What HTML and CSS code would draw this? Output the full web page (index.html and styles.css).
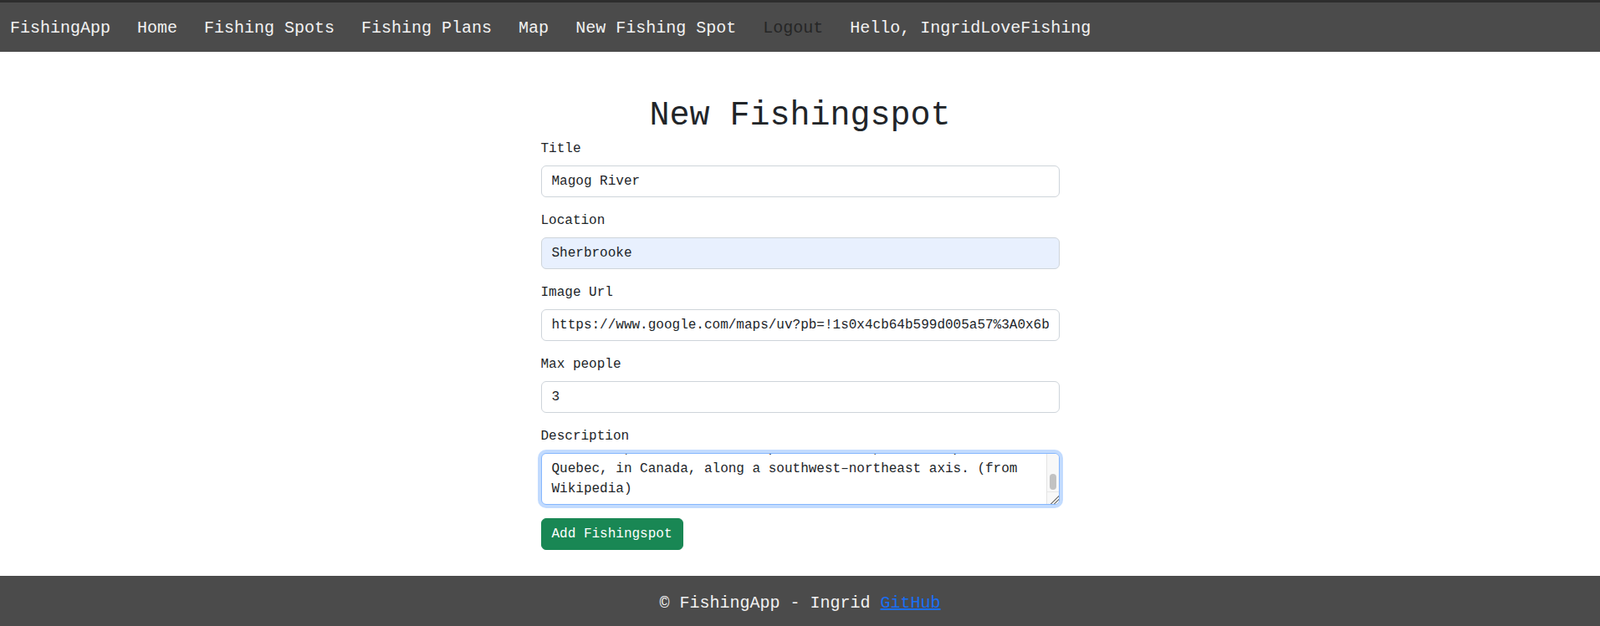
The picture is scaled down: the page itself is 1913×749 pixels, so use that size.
FILE: index.html
```html
<!DOCTYPE html>
<html lang="en">
<head>
<meta charset="utf-8">
<title>New Fishingspot</title>
<link rel="stylesheet" href="styles.css">
</head>
<body>
<nav class="navbar">
  <a class="nav-item brand" href="#">FishingApp</a>
  <a class="nav-item" href="#">Home</a>
  <a class="nav-item" href="#">Fishing Spots</a>
  <a class="nav-item" href="#">Fishing Plans</a>
  <a class="nav-item" href="#">Map</a>
  <a class="nav-item" href="#">New Fishing Spot</a>
  <a class="nav-item muted" href="#">Logout</a>
  <span class="nav-item">Hello, IngridLoveFishing</span>
</nav>
<main class="main">
  <h1 class="page-title">New Fishingspot</h1>
  <form class="form-wrap">
    <div class="field">
      <label class="form-label" for="title">Title</label>
      <input class="form-control" id="title" type="text" value="Magog River">
    </div>
    <div class="field">
      <label class="form-label" for="location">Location</label>
      <input class="form-control autofilled" id="location" type="text" value="Sherbrooke">
    </div>
    <div class="field">
      <label class="form-label" for="image">Image Url</label>
      <input class="form-control" id="image" type="text" value="https://www.google.com/maps/uv?pb=!1s0x4cb64b599d005a57%3A0x6b8c2f7a4e1d3c90">
    </div>
    <div class="field">
      <label class="form-label" for="max">Max people</label>
      <input class="form-control" id="max" type="text" value="3">
    </div>
    <div class="field">
      <label class="form-label" for="description">Description</label>
      <div class="textarea-wrap">
        <textarea class="form-control textarea focused" id="description" rows="2">The Magog River is a tributary of the Saint-François River.
It drains Lake Memphrémagog and flows to Sherbrooke.
In Estrie, the river flows past the town, next to pools of Quebec, in Canada, along a southwest–northeast axis. (from Wikipedia)</textarea>
        <div class="fake-scrollbar" aria-hidden="true">
          <div class="sb-track"><div class="sb-thumb"></div></div>
          <div class="sb-corner"></div>
        </div>
      </div>
    </div>
    <button class="btn-success" type="button">Add Fishingspot</button>
  </form>
</main>
<footer class="footer">
  <span class="footer-text">© FishingApp - Ingrid <a class="footer-link" href="#">GitHub</a></span>
</footer>
<script src="script.js"></script>
</body>
</html>
```

FILE: styles.css
```css
* {
  box-sizing: border-box;
}

html, body {
  height: 100%;
}

body {
  margin: 0;
  min-height: 100vh;
  display: flex;
  flex-direction: column;
  font-family: "Liberation Mono", "Courier New", monospace;
  font-size: 16px;
  line-height: 24px;
  color: #212529;
  background: #ffffff;
}

.navbar {
  display: flex;
  align-items: center;
  gap: 32px;
  padding: 16px 0 13px 12px;
  background: #4b4b4b;
  border-top: 3px solid #2d2d2d;
}

.nav-item {
  font-size: 20px;
  line-height: 30px;
  color: #f2f2f2;
  text-decoration: none;
  white-space: nowrap;
}

.nav-item.muted {
  color: #262626;
}

.main {
  display: flex;
  flex-direction: column;
  align-items: center;
}

.page-title {
  margin: 53px 0 3px;
  font-size: 40px;
  line-height: 48px;
  font-weight: 400;
  text-align: center;
}

.form-wrap {
  width: 620px;
  display: flex;
  flex-direction: column;
  align-items: flex-start;
}

.field {
  width: 100%;
  margin-bottom: 16px;
}

.form-label {
  display: block;
  margin-bottom: 8px;
  font-size: 16px;
  line-height: 24px;
}

.form-control {
  display: block;
  width: 100%;
  height: 38px;
  padding: 6px 12px;
  font-family: inherit;
  font-size: 16px;
  line-height: 24px;
  color: #212529;
  background: #ffffff;
  border: 1px solid #ced4da;
  border-radius: 6px;
  outline: none;
}

.form-control.autofilled {
  background: #e8f0fe;
}

.textarea-wrap {
  position: relative;
}

.textarea {
  height: 62px;
  padding-right: 27px;
  resize: none;
  overflow: hidden;
}

.textarea.focused {
  border-color: #86b7fe;
  box-shadow: 0 0 0 4px rgba(13, 110, 253, 0.25);
}

.fake-scrollbar {
  position: absolute;
  top: 1px;
  right: 1px;
  bottom: 1px;
  width: 15px;
  display: flex;
  flex-direction: column;
  background: #f8f8f8;
  border-left: 1px solid #e4e4e4;
  border-radius: 0 5px 5px 0;
  overflow: hidden;
}

.sb-track {
  flex: 1;
  display: flex;
  flex-direction: column;
  justify-content: flex-end;
  align-items: center;
  padding-bottom: 2px;
}

.sb-thumb {
  width: 8px;
  height: 19px;
  border-radius: 4px;
  background: #c2c2c2;
}

.sb-corner {
  height: 15px;
  border-top: 1px solid #e8e8e8;
  background:
    linear-gradient(135deg, transparent 0 62%, #8a8a8a 62% 68%, transparent 68% 78%, #8a8a8a 78% 84%, transparent 84%),
    #f8f8f8;
}

.btn-success {
  padding: 6px 12px;
  font-family: inherit;
  font-size: 16px;
  line-height: 24px;
  color: #ffffff;
  background: #198754;
  border: 1px solid #198754;
  border-radius: 6px;
  cursor: pointer;
}

.footer {
  margin-top: auto;
  height: 60px;
  display: flex;
  align-items: center;
  justify-content: center;
  padding-top: 6px;
  background: #4b4b4b;
  color: #f2f2f2;
  font-size: 20px;
  line-height: 30px;
}

.footer-link {
  color: #1a6ef5;
  text-decoration: underline;
}
```

FILE: script.js
```js
(function () {
  var ta = document.getElementById('description');
  var idx = ta.value.indexOf('Wikipedia');
  function apply() {
    ta.focus();
    ta.setSelectionRange(idx, idx);
    ta.scrollTop = ta.scrollHeight;
  }
  apply();
  window.addEventListener('load', apply);
})();
```
